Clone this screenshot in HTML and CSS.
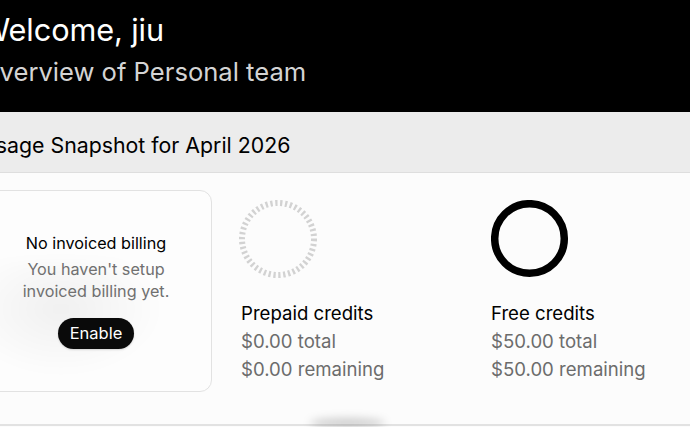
FILE: index.html
```html
<!DOCTYPE html>
<html lang="en">
<head>
<meta charset="utf-8">
<title>Welcome</title>
<link rel="stylesheet" href="styles.css">
</head>
<body>
<div class="page">
  <header class="hero">
    <h1 class="hero-title">Welcome, jiu</h1>
    <p class="hero-sub">Overview of Personal team</p>
  </header>
  <section class="band">
    <h2 class="band-title">Usage Snapshot for April 2026</h2>
  </section>
  <main class="usage">
    <div class="card">
      <div class="card-blur"></div>
      <div class="card-body">
        <div class="card-title">No invoiced billing</div>
        <div class="card-desc">You haven't setup<br>invoiced billing yet.</div>
        <button class="btn">Enable</button>
      </div>
    </div>
    <div class="stat stat-prepaid">
      <svg class="ring" width="80" height="80" viewBox="0 0 80 80">
        <circle cx="39" cy="39" r="36" fill="none" stroke="#d2d2d2" stroke-width="6" stroke-dasharray="2.3 2.6"/>
      </svg>
      <div class="stat-title">Prepaid credits</div>
      <div class="stat-line">$0.00 total</div>
      <div class="stat-line">$0.00 remaining</div>
    </div>
    <div class="stat stat-free">
      <svg class="ring" width="80" height="80" viewBox="0 0 80 80">
        <circle cx="38.5" cy="38.5" r="34.8" fill="none" stroke="#000" stroke-width="7.5"/>
      </svg>
      <div class="stat-title">Free credits</div>
      <div class="stat-line">$50.00 total</div>
      <div class="stat-line">$50.00 remaining</div>
    </div>
  </main>
  <div class="footer-line">
    <div class="footer-shadow"></div>
  </div>
</div>
</body>
</html>
```

FILE: styles.css
```css
* { box-sizing: border-box; }
html, body { margin: 0; padding: 0; }
body {
  background: #fcfcfc;
  font-family: Inter, "Noto Sans", sans-serif;
  color: #000;
  overflow: hidden;
  width: 690px;
  height: 427px;
}
.page {
  margin-left: -20px;
  width: 730px;
}
.hero {
  background: #000;
  height: 112px;
  padding-top: 12px;
}
.hero-title {
  margin: 0;
  font-size: 30.7px;
  line-height: 36px;
  font-weight: 400;
  color: #fff;
  letter-spacing: -0.1px;
}
.hero-sub {
  margin: 8px 0 0;
  font-size: 25.6px;
  line-height: 32px;
  color: #d4d4d4;
  font-weight: 400;
}
.band {
  background: #ececec;
  height: 61px;
  border-bottom: 1px solid #dedede;
  display: flex;
  align-items: center;
}
.band-title {
  margin: 0;
  font-size: 21.3px;
  font-weight: 400;
  line-height: 28px;
  padding-top: 5px;
}
.usage {
  display: flex;
  align-items: flex-start;
  padding-top: 17px;
  height: 255px;
}
.card {
  position: relative;
  width: 232px;
  height: 202px;
  border: 1px solid #e2e2e2;
  border-radius: 12px;
  background: #fdfdfd;
  overflow: hidden;
  display: flex;
  align-items: center;
  justify-content: center;
}
.card-blur {
  position: absolute;
  left: -10px;
  top: 70px;
  width: 200px;
  height: 120px;
  background: radial-gradient(ellipse at 45% 40%, rgba(0,0,0,0.05), rgba(0,0,0,0) 65%);
  filter: blur(6px);
}
.card-body {
  position: relative;
  display: flex;
  flex-direction: column;
  align-items: center;
  text-align: center;
  margin-top: -2px;
}
.card-title {
  font-size: 16.2px;
  line-height: 22px;
  color: #000;
}
.card-desc {
  margin-top: 4px;
  font-size: 16.2px;
  line-height: 22px;
  color: #707070;
}
.btn {
  margin-top: 16px;
  height: 31px;
  padding: 0 12px;
  border: none;
  border-radius: 16px;
  background: #0a0a0a;
  color: #fff;
  font-family: inherit;
  font-size: 16.5px;
  line-height: 31px;
  box-shadow: 0 1px 2px rgba(0,0,0,0.15);
}
.stat {
  display: flex;
  flex-direction: column;
  padding-top: 10px;
}
.stat-prepaid {
  margin-left: 27px;
  width: 252px;
}
.ring {
  display: block;
  margin-bottom: 19px;
}
.stat-prepaid .stat-title,
.stat-prepaid .stat-line { padding-left: 2px; }
.stat-title {
  font-size: 18.6px;
  line-height: 28px;
  color: #000;
}
.stat-line {
  font-size: 18.6px;
  line-height: 28px;
  color: #6c6c6c;
}
.footer-line {
  position: relative;
  height: 3px;
  border-top: 2px solid #e2e2e2;
  margin-top: -4px;
}
.footer-shadow {
  position: absolute;
  left: 330px;
  top: -8px;
  width: 75px;
  height: 10px;
  border-radius: 50%;
  background: rgba(0,0,0,0.18);
  filter: blur(4px);
}
```
